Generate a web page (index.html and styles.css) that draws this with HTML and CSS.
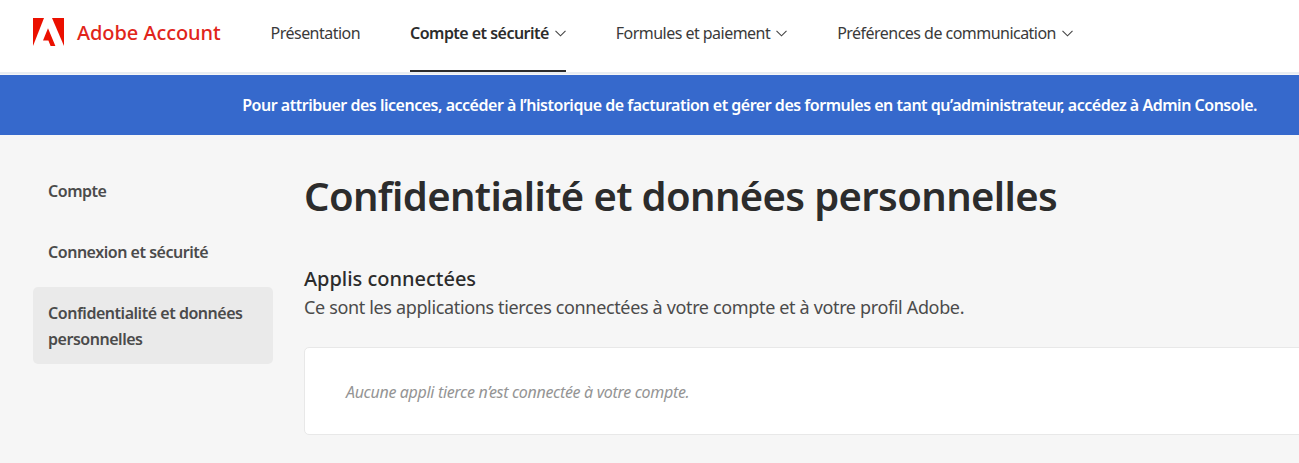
FILE: index.html
```html
<!DOCTYPE html>
<html lang="fr">
<head>
    <meta charset="UTF-8">
    <meta name="viewport" content="width=device-width, initial-scale=1.0">
    <title>Adobe Account</title>
    <link rel="stylesheet" href="styles.css">
</head>
<body>
    <header class="topbar">
        <a class="brand" href="#">
            <svg class="brand-logo" viewBox="0 0 32 28" aria-hidden="true">
                <path d="M1 0H12L1 28Z"/>
                <path d="M20 0H32V28Z"/>
                <path d="M16 10.3L23.4 28H18.6L16.4 22.4H11Z"/>
            </svg>
            <span>Adobe Account</span>
        </a>
        <nav class="mainnav">
            <a class="mainnav-item" href="#">Présentation</a>
            <a class="mainnav-item active" href="#">Compte et sécurité
                <svg class="chevron" viewBox="0 0 11 7"><path d="M.5 .8l5 5 5-5"/></svg></a>
            <a class="mainnav-item" href="#">Formules et paiement
                <svg class="chevron" viewBox="0 0 11 7"><path d="M.5 .8l5 5 5-5"/></svg></a>
            <a class="mainnav-item" href="#">Préférences de communication
                <svg class="chevron" viewBox="0 0 11 7"><path d="M.5 .8l5 5 5-5"/></svg></a>
        </nav>
    </header>

    <div class="banner">Pour attribuer des licences, accéder à l’historique de facturation et gérer des formules en tant qu’administrateur, accédez à Admin Console.</div>

    <div class="layout">
        <aside class="sidenav">
            <a class="sidenav-item" href="#">Compte</a>
            <a class="sidenav-item" href="#">Connexion et sécurité</a>
            <a class="sidenav-item selected" href="#">Confidentialité et données personnelles</a>
        </aside>
        <main class="content">
            <h1>Confidentialité et données personnelles</h1>
            <h2>Applis connectées</h2>
            <p class="lead">Ce sont les applications tierces connectées à votre compte et à votre profil Adobe.</p>
            <div class="card">Aucune appli tierce n’est connectée à votre compte.</div>
        </main>
    </div>
</body>
</html>
```

FILE: styles.css
```css
html, body {
    height: 100%;
}

body {
    margin: 0;
    overflow: hidden;
    background: #f6f6f6;
    color: #2c2c2c;
    font-family: "Noto Sans", "Open Sans", sans-serif;
}

a {
    color: inherit;
    text-decoration: none;
}

.topbar {
    display: flex;
    height: 72px;
    padding-left: 32px;
    background: #fff;
    border-bottom: 2px solid #e9edf2;
}

.brand {
    display: flex;
    align-items: center;
    gap: 13px;
    height: 64px;
    margin-right: 50px;
    color: #e1251b;
    font-size: 20px;
    font-weight: 500;
    letter-spacing: -0.07px;
}

.brand-logo {
    width: 32px;
    height: 28px;
    fill: #eb1000;
}

.mainnav {
    display: flex;
    gap: 50px;
}

.mainnav-item {
    display: flex;
    align-items: center;
    gap: 6px;
    height: 66px;
    font-size: 16px;
    letter-spacing: -0.53px;
    color: #3a3a3a;
}

.mainnav-item.active {
    height: 72px;
    padding-bottom: 4px;
    box-sizing: border-box;
    font-weight: 600;
    color: #2c2c2c;
    border-bottom: 2px solid #2c2c2c;
}

.chevron {
    width: 11px;
    height: 7px;
    fill: none;
    stroke: #444;
    stroke-width: 1.1;
}

.banner {
    height: 60px;
    margin-top: 1px;
    padding-right: 42px;
    background: #3669cc;
    color: #fff;
    font-size: 16px;
    font-weight: 600;
    letter-spacing: -0.485px;
    line-height: 60px;
    text-align: right;
    white-space: nowrap;
}

.layout {
    display: flex;
    padding-left: 33px;
}

.sidenav {
    flex: none;
    display: flex;
    flex-direction: column;
    gap: 9px;
    width: 240px;
    margin-right: 31px;
    padding-top: 30px;
}

.sidenav-item {
    padding: 13px 15px;
    border-radius: 5px;
    color: #4b4b4b;
    font-size: 16px;
    font-weight: 600;
    letter-spacing: -0.47px;
    line-height: 26px;
}

.sidenav-item.selected {
    padding-bottom: 12px;
    background: #eaeaea;
}

.content {
    flex: 1;
    padding-top: 36px;
}

h1 {
    margin: 0 0 44px;
    font-size: 40px;
    font-weight: 600;
    line-height: 50px;
    letter-spacing: -0.63px;
}

h2 {
    margin: 0;
    font-size: 20px;
    font-weight: 500;
    line-height: 27px;
    letter-spacing: -0.02px;
}

.lead {
    margin: 0 0 25px;
    color: #4b4b4b;
    font-size: 18px;
    line-height: 30px;
    letter-spacing: -0.35px;
}

.card {
    height: 86px;
    margin-right: -8px;
    padding-left: 41px;
    background: #fff;
    border: 1px solid #e8e8e8;
    border-radius: 5px;
    color: #949494;
    font-size: 16px;
    font-style: italic;
    letter-spacing: -0.33px;
    line-height: 88px;
}
```
